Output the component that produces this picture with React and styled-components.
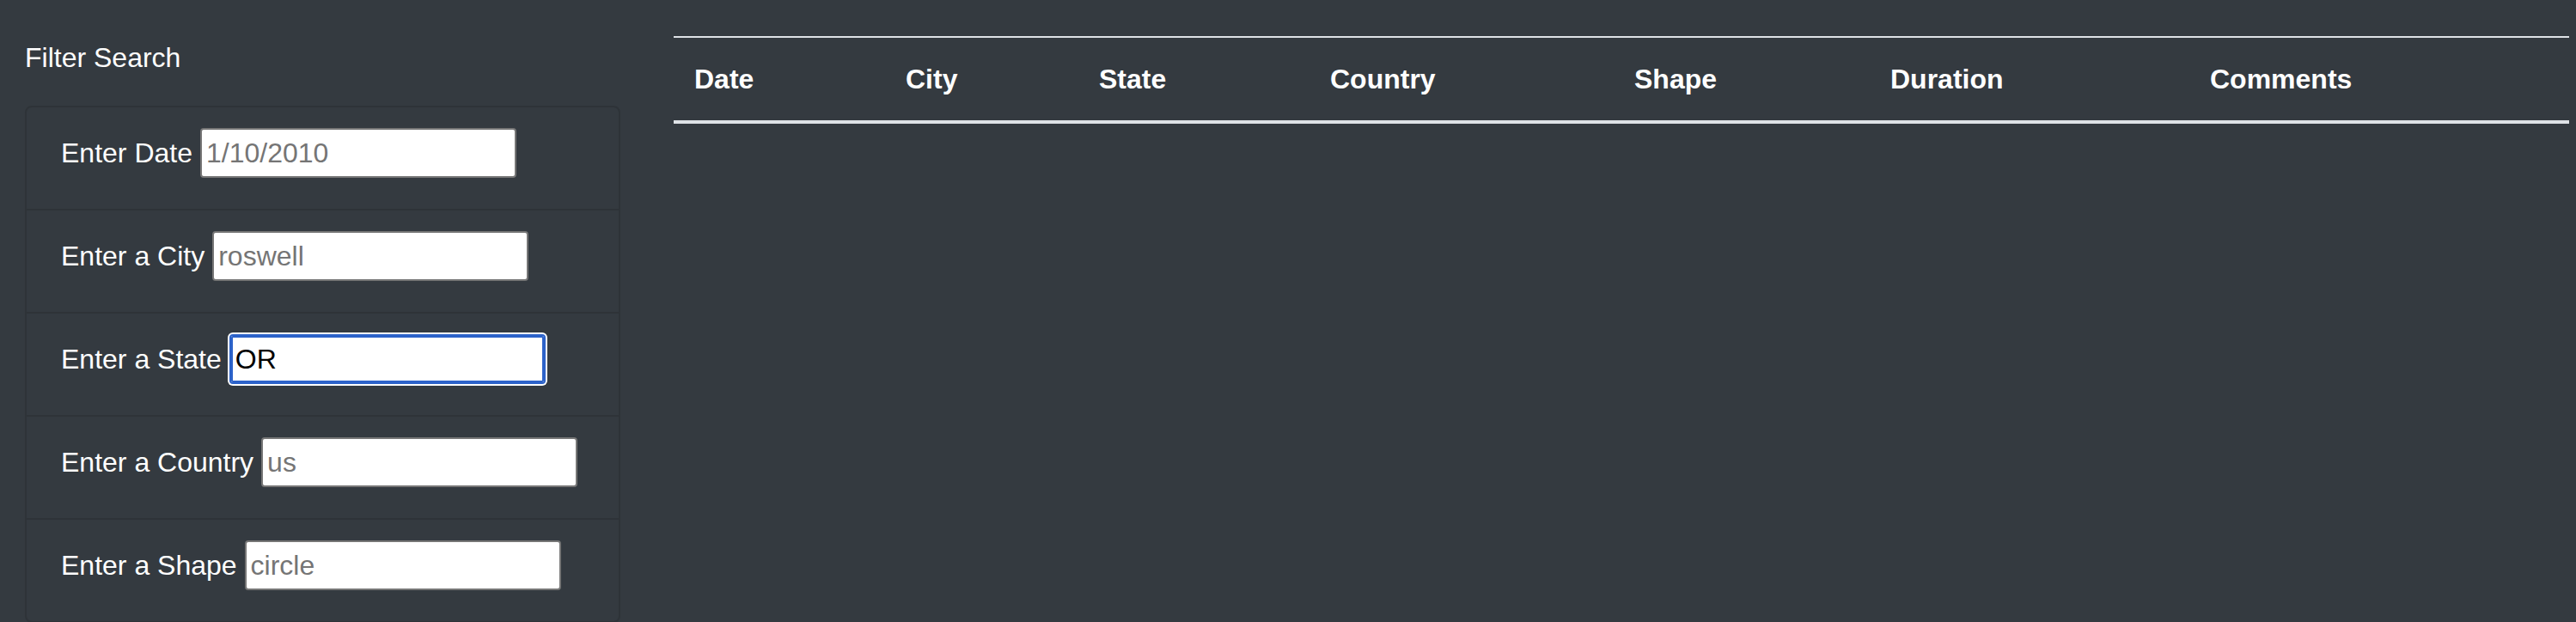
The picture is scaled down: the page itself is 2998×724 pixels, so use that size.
import React from "react";
import styled, { createGlobalStyle } from "styled-components";

const Global = createGlobalStyle`
  html, body {
    margin: 0;
    padding: 0;
    background: #343a40;
    overflow: hidden;
  }
  body {
    font-family: "Liberation Sans", Arial, sans-serif;
    font-size: 32px;
    line-height: 48px;
    color: #fff;
  }
  * { box-sizing: border-box; }
`;

const Page = styled.div`
  display: flex;
  width: 2998px;
  height: 724px;
  background: #343a40;
`;

const Sidebar = styled.aside`
  width: 752px;
  padding: 43px 30px 0 29px;
  display: flex;
  flex-direction: column;
  gap: 32px;
`;

const SideTitle = styled.div`
  font-size: 32px;
  line-height: 48px;
  color: #fff;
`;

const Card = styled.ul`
  list-style: none;
  margin: 0;
  padding: 0;
  border: 2px solid #2e3338;
  border-radius: 8px;
  width: 693px;
`;

const Row = styled.li`
  height: 118px;
  padding: 24px 40px 36px;
  display: flex;
  align-items: center;
  gap: 9px;
  border-top: ${(p) => (p.$first ? "none" : "2px solid #2e3338")};
  box-sizing: content-box;
  height: 58px;
`;

const Label = styled.label`
  white-space: nowrap;
  color: #fff;
  font-size: 32px;
  line-height: 48px;
`;

const Field = styled.input`
  width: 368px;
  height: 58px;
  border: 2px solid #767676;
  border-radius: 4px;
  background: #fff;
  padding: 0 5px;
  font-family: "Liberation Sans", Arial, sans-serif;
  font-size: 32px;
  line-height: 48px;
  color: #000;
  outline: none;
  box-shadow: ${(p) =>
    p.$focused ? "inset 0 0 0 2px #2c62c9, 0 0 0 2px #fff" : "none"};
  border-color: ${(p) => (p.$focused ? "#2c62c9" : "#767676")};
  &::placeholder {
    color: #757575;
    opacity: 1;
  }
`;

const Main = styled.main`
  flex: 1;
  padding: 42px 8px 0 32px;
`;

const Table = styled.table`
  width: 2206px;
  border-collapse: collapse;
  color: #fff;
`;

const Th = styled.th`
  text-align: left;
  font-weight: 700;
  font-size: 32px;
  line-height: 48px;
  padding: 24px;
  border-top: 2px solid #dee2e6;
  border-bottom: 4px solid #dee2e6;
  width: ${(p) => p.$w}px;
  white-space: nowrap;
`;

const fields = [
  { label: "Enter Date", ph: "1/10/2010" },
  { label: "Enter a City", ph: "roswell" },
  { label: "Enter a State", ph: "CA", value: "OR", focused: true },
  { label: "Enter a Country", ph: "us" },
  { label: "Enter a Shape", ph: "circle" },
];

const columns = [
  ["Date", 246],
  ["City", 225],
  ["State", 269],
  ["Country", 354],
  ["Shape", 298],
  ["Duration", 372],
  ["Comments", 442],
];

export default function App() {
  return (
    <>
      <Global />
      <Page>
        <Sidebar>
          <SideTitle>Filter Search</SideTitle>
          <Card>
            {fields.map((f, i) => (
              <Row key={f.label} $first={i === 0}>
                <Label htmlFor={`f${i}`}>{f.label}</Label>
                <Field
                  id={`f${i}`}
                  type="text"
                  placeholder={f.ph}
                  defaultValue={f.value}
                  $focused={f.focused}
                />
              </Row>
            ))}
          </Card>
        </Sidebar>
        <Main>
          <Table>
            <thead>
              <tr>
                {columns.map(([c, w]) => (
                  <Th key={c} $w={w}>
                    {c}
                  </Th>
                ))}
              </tr>
            </thead>
            <tbody></tbody>
          </Table>
        </Main>
      </Page>
    </>
  );
}
